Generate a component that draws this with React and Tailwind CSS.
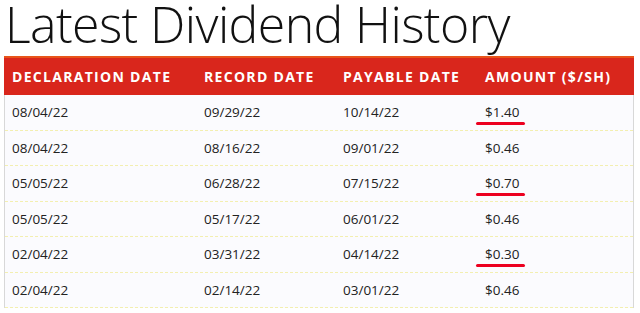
export default function App() {
  const rows = [
    ["08/04/22", "09/29/22", "10/14/22", "$1.40", true],
    ["08/04/22", "08/16/22", "09/01/22", "$0.46", false],
    ["05/05/22", "06/28/22", "07/15/22", "$0.70", true],
    ["05/05/22", "05/17/22", "06/01/22", "$0.46", false],
    ["02/04/22", "03/31/22", "04/14/22", "$0.30", true],
    ["02/04/22", "02/14/22", "03/01/22", "$0.46", false],
  ];
  return (
    <div className="w-[640px] h-[313px] bg-white overflow-hidden" style={{ fontFamily: '"Open Sans", sans-serif' }}>
      <div className="h-[56px] overflow-hidden">
        <h1 className="-mt-[4px] h-[60px] pl-[5px] text-[50px] font-light leading-[56px] text-[#111] tracking-[-0.6px] whitespace-nowrap">
          Latest Dividend History
        </h1>
      </div>
      <div className="ml-[4px] w-[630px]">
        <div className="flex h-[39px] items-center bg-[#d9261c] border-t-2 border-[#e8541a] text-[14px] font-bold tracking-[1.3px] text-white">
          <div className="w-[200px] pl-[8px]">DECLARATION DATE</div>
          <div className="w-[139px]">RECORD DATE</div>
          <div className="w-[142px]">PAYABLE DATE</div>
          <div>AMOUNT ($/SH)</div>
        </div>
        <div className="bg-[#fbfbfe] border-x border-[#d8d8d8]">
          {rows.map((r, i) => (
            <div key={i} className="flex h-[35.5px] items-center border-b border-dashed border-[#f3efb0] text-[13.5px] text-[#222]">
              <div className="w-[199px] pl-[7px]">{r[0]}</div>
              <div className="w-[139px]">{r[1]}</div>
              <div className="w-[142px]">{r[2]}</div>
              <div className="relative">
                {r[3]}
                {r[4] && (
                  <span className="absolute left-[-9px] top-[20px] h-[3px] w-[49px] rounded-full bg-[#ec0020]" />
                )}
              </div>
            </div>
          ))}
        </div>
      </div>
    </div>
  );
}
